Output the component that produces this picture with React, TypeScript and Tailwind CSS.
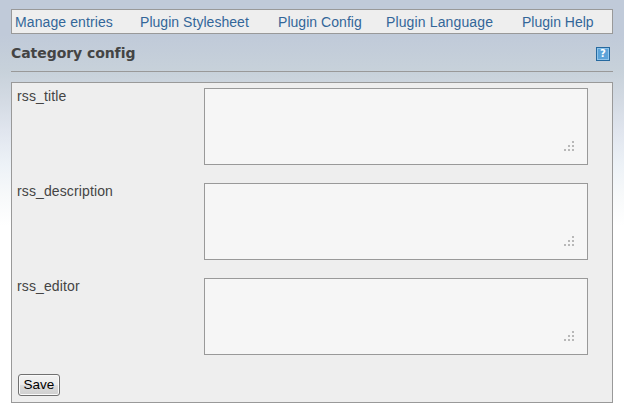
const links = [
  ["Manage entries", "ml-[3px] w-[98px] tracking-[0.1px]"],
  ["Plugin Stylesheet", "ml-[27px] w-[109px] tracking-[0.04px]"],
  ["Plugin Config", "ml-[29px] w-[84px] tracking-[0.04px]"],
  ["Plugin Language", "ml-[24px] w-[107px] tracking-[0.13px]"],
  ["Plugin Help", "ml-[29px] w-[72px]"],
];

function Field({ name }: { name: string }) {
  return (
    <div className="flex h-[95px] items-start">
      <label className="w-[187px] text-[14px] leading-[16px] tracking-[0.12px] text-[#444]">{name}</label>
      <div className="flex h-[77px] w-[384px] items-end justify-end border border-[#999] bg-[#f6f6f6] pr-[12px] pb-[12px]">
        <svg width="12" height="11" fill="#b8b8b8" shapeRendering="crispEdges">
          <path d="M9 0h2v2h-2zM5 4h2v2h-2zM9 4h2v2h-2zM1 8h2v2h-2zM5 8h2v2h-2zM9 8h2v2h-2z" />
        </svg>
      </div>
    </div>
  );
}

export default function App() {
  return (
    <div className="h-[418px] w-[624px] bg-[linear-gradient(to_bottom,#c0cad9_0px,#c0cad9_35px,#c7d1da_70px,#d3dae3_100px,#e0e5ee_130px,#edf2f7_165px,#f7f9fa_195px,#ffffff_226px)] px-[11px] pt-[9px] font-['Liberation_Sans',Arial,sans-serif]">
      <nav className="flex h-[25px] w-[602px] items-center border border-[#999] bg-[#eee] pt-[2px] text-[14px] text-[#369]">
        {links.map(([label, place]) => (
          <a key={label} className={`${place} whitespace-nowrap`}>{label}</a>
        ))}
      </nav>
      <header className="flex h-[38px] w-[602px] items-center justify-between border-b border-[#999] pt-[3px] pr-[3px]">
        <h1 className="pb-[2px] font-['DejaVu_Sans',Verdana,sans-serif] text-[14px] font-bold tracking-[-0.06px] text-[#444]">Category config</h1>
        <span className="flex h-[14px] w-[14px] items-center justify-center border border-[#26699f] bg-[#5ba3d9] font-['DejaVu_Sans',sans-serif] text-[10px] leading-none font-bold text-white ring-1 ring-[#8fc4ea] ring-inset">?</span>
      </header>
      <main className="mt-[10px] h-[321px] w-[602px] border border-[#999] bg-[#eee] pt-[5px] pl-[5px]">
        <Field name="rss_title" />
        <Field name="rss_description" />
        <Field name="rss_editor" />
        <button className="mt-px ml-px flex h-[22px] w-[42px] items-center justify-center rounded-[3px] border border-[#707070] bg-[linear-gradient(to_bottom,#f2f2f2_0%,#ebebeb_50%,#dddddd_50%,#cfcfcf_100%)] pt-px text-[13.5px] text-black ring-1 ring-[#fafafa] ring-inset">Save</button>
      </main>
    </div>
  );
}
